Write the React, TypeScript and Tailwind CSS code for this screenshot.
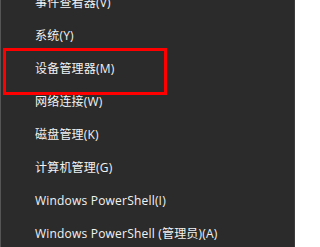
import React from 'react';

const items = [
  '事件查看器(V)',
  '系统(Y)',
  '设备管理器(M)',
  '网络连接(W)',
  '磁盘管理(K)',
  '计算机管理(G)',
  'Windows PowerShell(I)',
  'Windows PowerShell (管理员)(A)',
];

export default function App() {
  return (
    <div className="relative w-[295px] h-[247px] overflow-hidden bg-[#2b2b2b] border-l border-l-[#555555] border-r border-r-[#3a3a3a] font-['Open_Sans','Noto_Sans_CJK_SC',sans-serif] text-[12px] tracking-[0.2px] text-[#f2f2f2]">
      <ul className="-mt-[14px] flex flex-col">
        {items.map((label) => (
          <li key={label} className="h-[33px] flex items-center pl-[34px] whitespace-nowrap">
            {label}
          </li>
        ))}
      </ul>
      {/* highlight around 设备管理器 */}
      <div className="absolute left-[2px] top-[48px] w-[164px] h-[47px] border-[3px] border-[#ff0000] pointer-events-none" />
    </div>
  );
}
